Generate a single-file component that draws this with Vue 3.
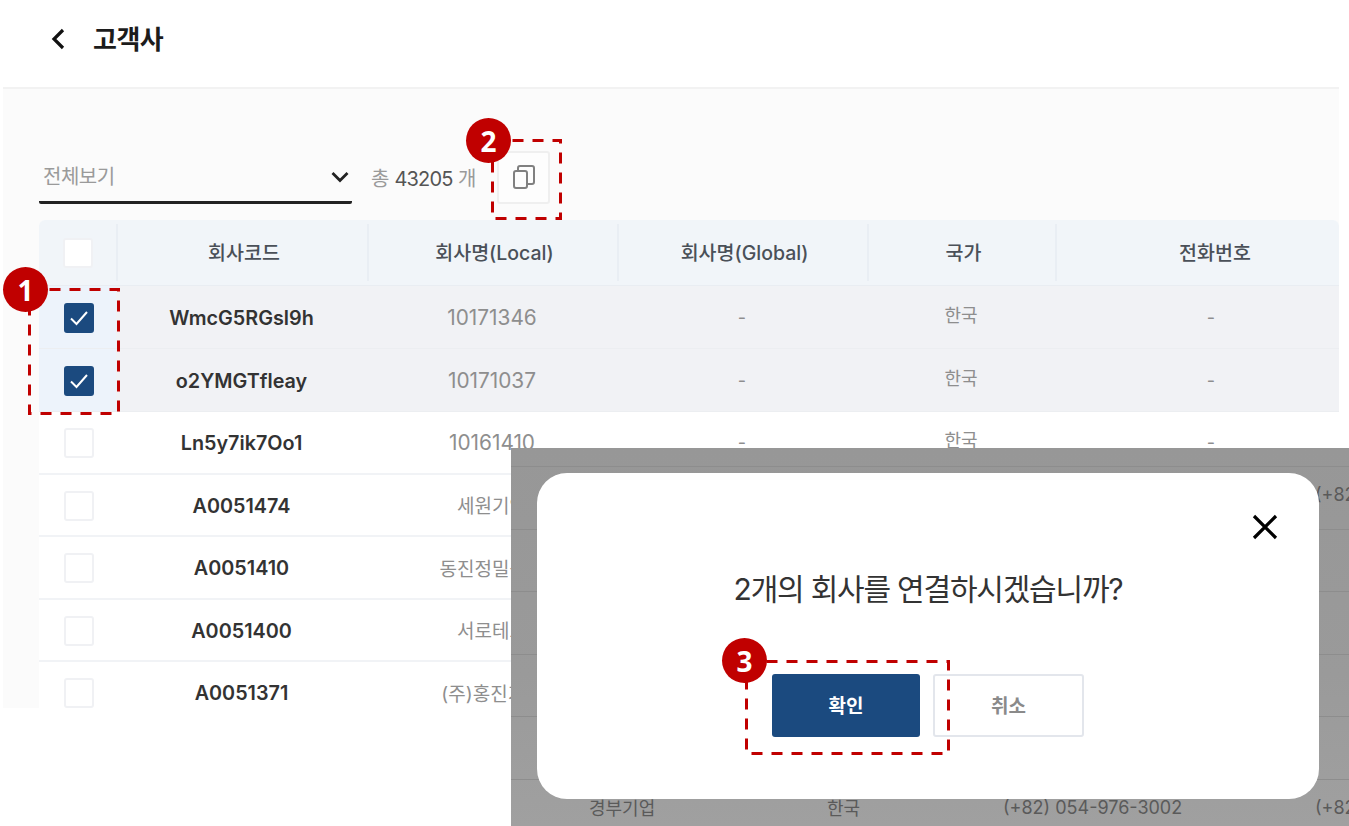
<script setup>
const rows = [
  { code: 'WmcG5RGsl9h', local: '10171346', checked: true },
  { code: 'o2YMGTfleay', local: '10171037', checked: true },
  { code: 'Ln5y7ik7Oo1', local: '10161410', checked: false },
  { code: 'A0051474', local: '세원기업', checked: false, text: true },
  { code: 'A0051410', local: '동진정밀공업', checked: false, text: true },
  { code: 'A0051400', local: '서로테크', checked: false, text: true },
  { code: 'A0051371', local: '(주)홍진기업', checked: false, text: true },
];

// rows of the page behind the dialog, only the edges show
const backRows = [
  { tail: '(+82' },
  {},
  {},
  {},
  {},
  { name: '경부기업', nation: '한국', phone: '(+82) 054-976-3002', tail: '(+82' },
];
</script>

<template>
  <div class="page">
    <header class="top">
      <svg class="back" width="16" height="24" viewBox="0 0 16 24"><path d="M13 3 4 12l9 9" fill="none" stroke="#111" stroke-width="3.2" /></svg>
      <h1>고객사</h1>
    </header>

    <section class="content">
      <div class="filters">
        <div class="select">
          <span>전체보기</span>
          <svg width="20" height="12" viewBox="0 0 20 12"><path d="M2.500 2 10 9.500 17.500 2" fill="none" stroke="#222" stroke-width="2.800" /></svg>
        </div>
        <div class="count">총 <b>43205</b> 개</div>
        <button class="copy">
          <svg width="22" height="24" viewBox="0 0 22 24" fill="none" stroke="#808080" stroke-width="2">
            <rect x="1" y="6" width="13" height="17" rx="2" />
            <path d="M5 6V3a2 2 0 0 1 2-2h12a2 2 0 0 1 2 2v14a2 2 0 0 1-2 2h-5" />
          </svg>
        </button>
      </div>

      <div class="table">
        <div class="row head">
          <div class="cell check"><span class="box"></span></div>
          <div class="cell">회사코드</div>
          <div class="cell">회사명(Local)</div>
          <div class="cell">회사명(Global)</div>
          <div class="cell">국가</div>
          <div class="cell last">전화번호</div>
        </div>
        <div v-for="row in rows" :key="row.code" class="row body" :class="{ selected: row.checked }">
          <div class="cell check">
            <span class="box" :class="{ on: row.checked }">
              <svg v-if="row.checked" width="20" height="16" viewBox="0 0 20 16"><path d="M2 8.500 7.500 14 18 2" fill="none" stroke="#fff" stroke-width="2" /></svg>
            </span>
          </div>
          <div class="cell code">{{ row.code }}</div>
          <div class="cell muted" :class="row.text ? 'name' : 'num'">{{ row.local }}</div>
          <div class="cell muted">-</div>
          <div class="cell muted nation">한국</div>
          <div class="cell muted phone">-</div>
        </div>
      </div>
    </section>

    <!-- annotation marks -->
    <svg class="mark m1" width="92" height="127"><rect x="1.500" y="1.500" width="89" height="124" /></svg>
    <svg class="mark m2" width="71" height="81"><rect x="1.500" y="1.500" width="68" height="78" /></svg>
    <div class="badge b1">1</div>
    <div class="badge b2">2</div>

    <div class="shot">
      <div class="back-rows">
        <div v-for="(r, i) in backRows" :key="i" class="back-row">
          <span>{{ r.name }}</span>
          <span>{{ r.nation }}</span>
          <span>{{ r.phone }}</span>
          <span>{{ r.tail }}</span>
        </div>
      </div>

      <div class="modal">
        <button class="close">
          <svg width="28" height="28" viewBox="0 0 28 28"><path d="M3 3l22 22M25 3 3 25" stroke="#000" stroke-width="3.200" /></svg>
        </button>
        <p>2개의 회사를 연결하시겠습니까?</p>
        <div class="actions">
          <button class="btn ok">확인</button>
          <button class="btn cancel">취소</button>
        </div>
      </div>

      <svg class="mark m3" width="205" height="95"><rect x="1.500" y="1.500" width="202" height="92" /></svg>
      <div class="badge b3">3</div>
    </div>
  </div>
</template>

<style>
html,
body {
  margin: 0;
  background: #fff;
}
</style>

<style scoped>
.page {
  position: relative;
  width: 1349px;
  height: 826px;
  overflow: hidden;
  background: #fff;
  font-family: Inter, "Noto Sans CJK KR", sans-serif;
  color: #333;
}

.top {
  display: flex;
  align-items: center;
  height: 78px;
  padding-left: 50px;
  gap: 27px;
}

.top h1 {
  margin: -4px 0 0;
  font-size: 26px;
  font-weight: 600;
  letter-spacing: -0.5px;
  color: #1c1c1c;
}

.content {
  height: 621px;
  margin: 9px 10px 0 3px;
  padding: 0 0 0 36px;
  border-top: 2px solid #f2f2f2;
  background: #fbfbfb;
  overflow: hidden;
  box-sizing: border-box;
}

.filters {
  display: flex;
  align-items: center;
  height: 131px;
  padding-top: 48px;
  box-sizing: border-box;
}

.select {
  display: flex;
  align-items: center;
  justify-content: space-between;
  width: 313px;
  height: 53px;
  margin-top: -2px;
  padding: 0 2px 0 4px;
  border-bottom: 3px solid #222;
  border-radius: 2px;
  box-sizing: border-box;
  font-size: 20px;
  letter-spacing: -0.5px;
  color: #9a9a9a;
}

.select span {
  margin-top: -2px;
}

.select svg {
  margin-top: 2px;
}

.count {
  margin: -2px 0 0 19px;
  width: 126px;
  font-size: 20px;
  letter-spacing: -0.3px;
  color: #9a9a9a;
}

.count b {
  font-weight: 400;
  letter-spacing: -0.8px;
  color: #555;
}

.copy {
  display: flex;
  align-items: center;
  justify-content: center;
  width: 53px;
  height: 53px;
  margin-top: -3px;
  padding: 0;
  border: 2px solid #efefef;
  border-radius: 3px;
  background: #fdfdfd;
}

.table {
  width: 1300px;
  overflow: hidden;
  background: #fff;
  border-radius: 6px 6px 0 0;
}

.row {
  display: grid;
  grid-template-columns: 77px 251px 250px 250px 188px 320px;
  height: 62.5px;
  border-bottom: 2px solid #f1f3f6;
  box-sizing: border-box;
}

.head {
  height: 66px;
  background: #f1f5f9;
  border-bottom: 1px solid #e9edf2;
}

.head .cell {
  padding: 0 0 3px 5px;
  font-size: 19.5px;
  font-weight: 500;
  color: #4a5058;
  box-shadow: inset 2px 0 0 #e9eef4;
  margin: 4px 0;
  box-sizing: border-box;
}

.head .cell.check {
  padding: 0;
  box-shadow: none;
}

.head .cell.last {
  padding-left: 0;
}

.selected {
  height: 63px;
  background: #f1f2f5;
  border-bottom: 1px solid #eceef1;
}

.cell {
  display: flex;
  align-items: center;
  justify-content: center;
  font-size: 18px;
  white-space: nowrap;
}

.selected .check {
  background: #edf3fb;
}

.body .check {
  padding: 2px 0 0 2px;
  box-sizing: border-box;
}

.box {
  display: flex;
  align-items: center;
  justify-content: center;
  width: 30px;
  height: 30px;
  border: 2px solid #f0f1f4;
  border-radius: 3px;
  background: #fff;
  box-sizing: border-box;
}

.box.on {
  border-color: #1b4a7f;
  background: #1b4a7f;
}

.code {
  padding-top: 2px;
  font-size: 19.8px;
  font-weight: 600;
  color: #333;
  box-sizing: border-box;
}

.muted {
  color: #8e8e8e;
}

.num {
  font-size: 20.8px;
}

.name {
  font-size: 19px;
}

.nation {
  padding-bottom: 7px;
  box-sizing: border-box;
}

.phone {
  padding-right: 8px;
  box-sizing: border-box;
}

.mark {
  position: absolute;
}

.mark rect {
  fill: none;
  stroke: #c00000;
  stroke-width: 3;
  stroke-dasharray: 11 9;
}

.m1 {
  left: 28px;
  top: 288px;
}

.m2 {
  left: 491px;
  top: 139px;
}

.m3 {
  left: 234px;
  top: 212px;
}

.badge {
  position: absolute;
  display: flex;
  align-items: center;
  justify-content: center;
  width: 45px;
  height: 45px;
  border-radius: 50%;
  background: #c00000;
  color: #fff;
  font-family: "Noto Sans", sans-serif;
  font-size: 28px;
  font-weight: 700;
}

.b1 {
  left: 3px;
  top: 267px;
}

.b2 {
  left: 466px;
  top: 118px;
}

.b3 {
  left: 211px;
  top: 190px;
}

.shot {
  position: absolute;
  left: 511px;
  top: 448px;
  width: 838px;
  height: 378px;
  overflow: hidden;
  background: linear-gradient(180deg, #979797 0, #9a9a9a 60%, #a0a0a0 100%);
}

.back-rows {
  padding-top: 18px;
}

.back-row {
  display: grid;
  grid-template-columns: 238px 176px 312px 34px;
  align-items: center;
  height: 62.5px;
  padding: 0 0 6px 78px;
  border-top: 1px solid #8d8d8d;
  box-sizing: border-box;
  font-size: 18px;
  color: #5a5a5a;
  white-space: nowrap;
  overflow: hidden;
}

.modal {
  position: absolute;
  left: 26px;
  top: 25px;
  display: flex;
  flex-direction: column;
  align-items: center;
  width: 782px;
  height: 326px;
  border-radius: 30px;
  background: #fff;
}

.modal p {
  margin: 96px 0 0;
  font-size: 30px;
  letter-spacing: -1.2px;
  line-height: 40px;
  color: #333;
}

.close {
  position: absolute;
  top: 40px;
  right: 40px;
  padding: 0;
  border: 0;
  background: none;
  line-height: 0;
}

.actions {
  display: flex;
  gap: 13px;
  margin-top: 65px;
}

.btn {
  height: 63px;
  padding: 0 0 3px;
  border-radius: 3px;
  font-family: inherit;
  font-size: 19px;
  font-weight: 600;
  box-sizing: border-box;
}

.ok {
  width: 148px;
  border: 0;
  background: #1b4a7f;
  color: #fff;
}

.cancel {
  width: 151px;
  border: 2px solid #e3e6ec;
  background: #fff;
  color: #8a8a8a;
}
</style>
